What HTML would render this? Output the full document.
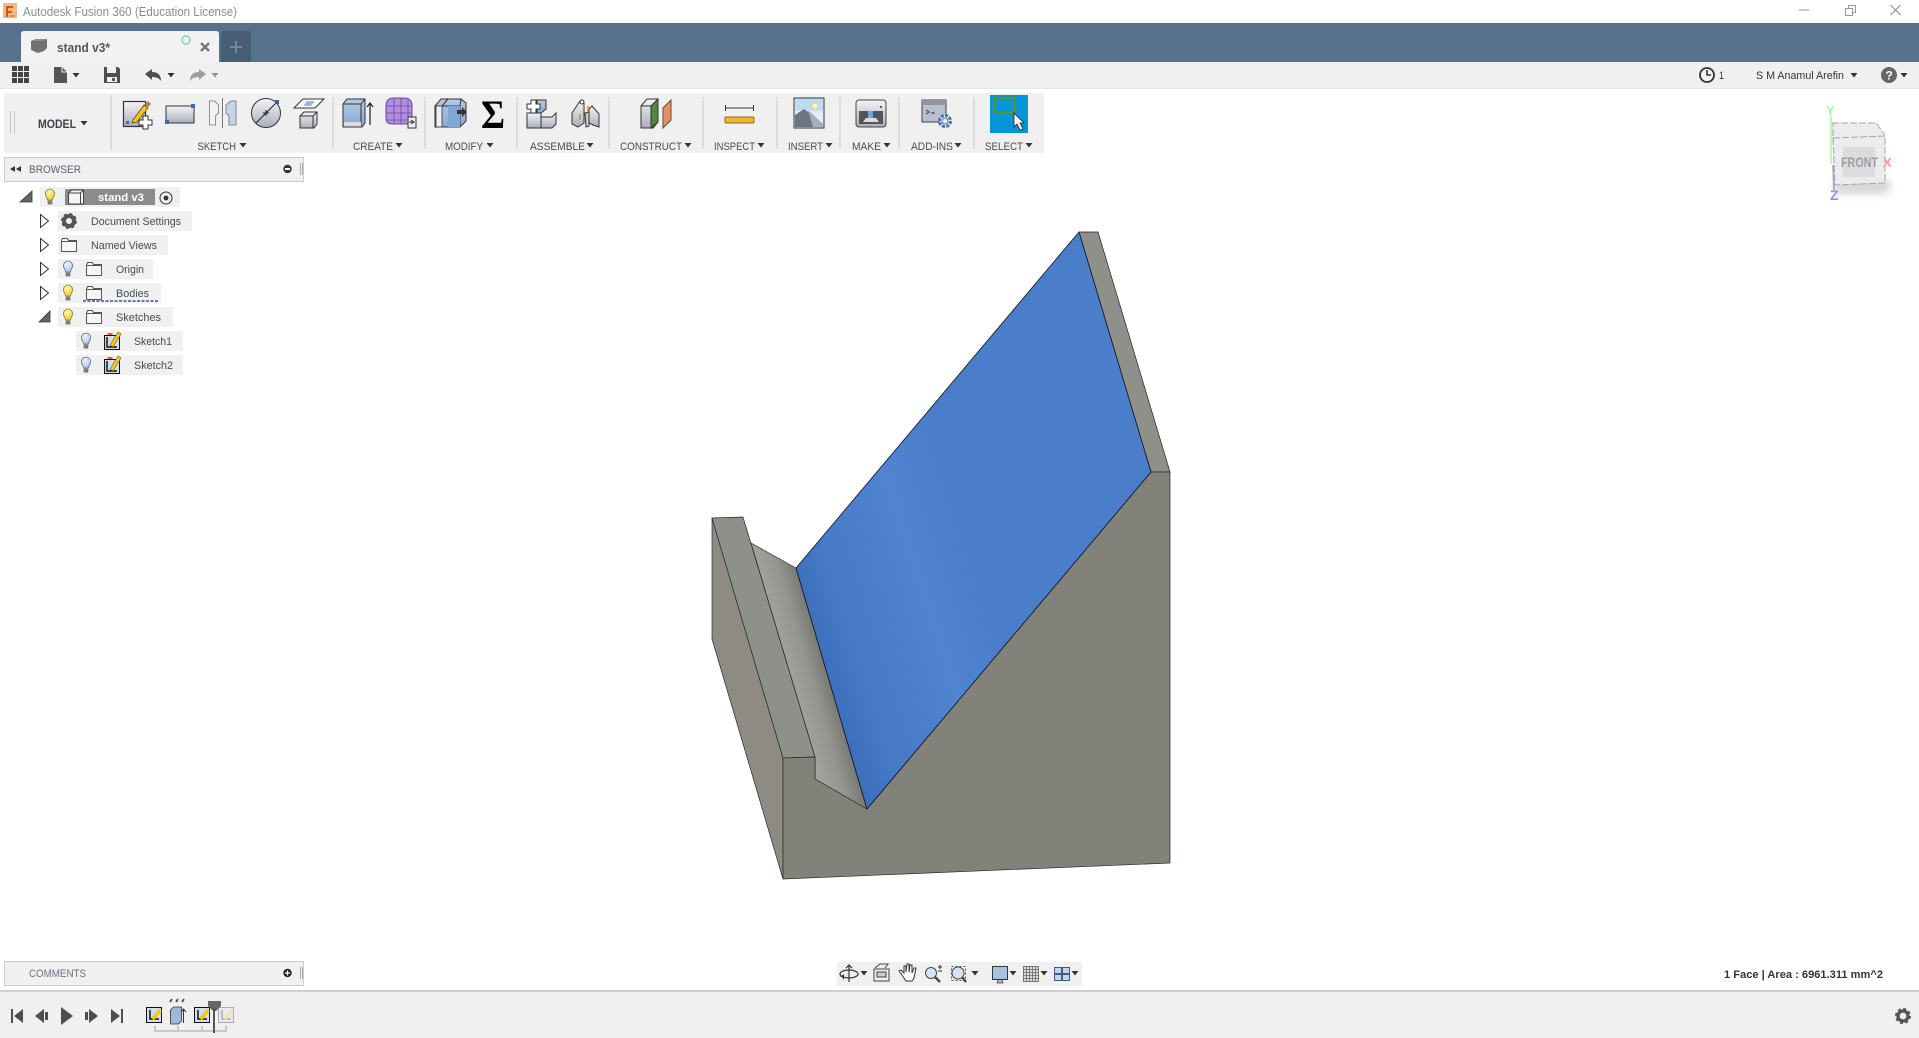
<!DOCTYPE html>
<html><head><meta charset="utf-8"><title>Autodesk Fusion 360</title>
<style>
html,body{margin:0;padding:0;background:#fff;width:1919px;height:1038px;overflow:hidden}
svg{display:block}
text{font-family:"Liberation Sans",sans-serif;font-size:11px;fill:#454b55}
</style></head><body>
<svg width="1919" height="1038" viewBox="0 0 1919 1038" xmlns="http://www.w3.org/2000/svg">
<defs>
<linearGradient id="g" x1="0" y1="0" x2="0" y2="1"><stop offset="0" stop-color="#f4f4f6"/><stop offset="1" stop-color="#a9aebb"/></linearGradient>
<linearGradient id="gb" x1="0" y1="0" x2="0" y2="1"><stop offset="0" stop-color="#b3cbe6"/><stop offset="1" stop-color="#88a9d2"/></linearGradient>
<linearGradient id="blue" gradientUnits="userSpaceOnUse" x1="815" y1="700" x2="1000" y2="640"><stop offset="0" stop-color="#376bb6"/><stop offset=".25" stop-color="#4578c5"/><stop offset=".7" stop-color="#5084d0"/><stop offset="1" stop-color="#4a7dca"/></linearGradient>
<linearGradient id="slope" gradientUnits="userSpaceOnUse" x1="786" y1="660" x2="827" y2="648"><stop offset="0" stop-color="#9fa29d"/><stop offset=".45" stop-color="#939590"/><stop offset=".8" stop-color="#7b7c77"/><stop offset="1" stop-color="#62635e"/></linearGradient>
<radialGradient id="by" cx=".4" cy=".3" r=".8"><stop offset="0" stop-color="#fff7b0"/><stop offset="1" stop-color="#f0c814"/></radialGradient>
<radialGradient id="bb" cx=".4" cy=".3" r=".8"><stop offset="0" stop-color="#eef3ff"/><stop offset="1" stop-color="#a5bdea"/></radialGradient>
<g id="bulbY"><path d="M-4-2a4.600 4.600 0 1 1 8 0c-1 1.600-1.500 2.500-1.500 4h-5c0-1.500-.5-2.400-1.500-4z" fill="url(#by)" stroke="#8a8040" stroke-width=".8"/><rect x="-2.400" y="2.500" width="4.800" height="4" rx="1" fill="#7c7c7c"/></g>
<g id="bulbB"><path d="M-4-2a4.600 4.600 0 1 1 8 0c-1 1.600-1.500 2.500-1.500 4h-5c0-1.500-.5-2.400-1.500-4z" fill="url(#bb)" stroke="#66708a" stroke-width=".8"/><rect x="-2.400" y="2.500" width="4.800" height="4" rx="1" fill="#7c7c7c"/></g>
<g id="folder"><path d="M.5 2.500V13.500H15.500V2.500H7.500L6.500.5H1.500L.5 2.500M.5 3.500H15.500" fill="#f6f6f6" stroke="#555" stroke-width="1"/></g>
<g id="sk"><rect x=".5" y="2.500" width="15" height="14" fill="#cfe0f2" stroke="#111"/><path d="M3 4v10h10" fill="none" stroke="#111" stroke-width="1.500"/><path d="M6 12L14-1l3 2L9 14z" fill="#f3c91a" stroke="#6f5a10" stroke-width=".6"/><path d="M3.500 0h5v2h-5z" fill="#e8603a"/></g>
<g id="skp"><rect x=".5" y=".5" width="15" height="15" fill="#cfe0f2" stroke="#111"/><path d="M4 3v9h9" fill="none" stroke="#111" stroke-width="1.500"/><path d="M5 11L13 2l3 2-8 9z" fill="#f3c91a"/></g>
<path id="tr" d="M-3.500-2h7l-3.500 4.500z" fill="#333"/>
<path id="tro" d="M.5.5L8.500 7 .5 13.500z" fill="#fff" stroke="#333" stroke-width="1"/>
</defs>

<!-- title bar -->
<rect width="1919" height="23" fill="#fff"/>
<rect x="3" y="3" width="14" height="15" fill="#f5b78a"/><path d="M6 6h7v2H8v3h4v2H8v4H6z" fill="#c85a12"/><rect x="10" y="15" width="5" height="2" fill="#e88a3a"/>
<text x="23" y="16" textLength="214" lengthAdjust="spacingAndGlyphs" style="font-size:12.500px;fill:#8c8c8c">Autodesk Fusion 360 (Education License)</text>
<path d="M1799 10h10" stroke="#999" stroke-width="1"/>
<path d="M1848.500 5.500h7v7h-7z" fill="#fff" stroke="#999"/><path d="M1845.500 8.500h7v7h-7z" fill="#fff" stroke="#999"/>
<path d="M1890.500 5l10 10M1900.500 5l-10 10" stroke="#888" stroke-width="1"/>

<!-- blue tab bar -->
<rect y="23" width="1919" height="39" fill="#57728c"/>
<path d="M21 62V34q0-3 3-3H216q3 0 3 3v28z" fill="#f2f2f3"/>
<path d="M221 62V34q0-3 3-3H248q3 0 3 3v28z" fill="#455d75"/>
<path d="M31 41l5-2h11v9l-3 3-6 2-7-3z" fill="#717171"/><path d="M31 41l5-2h11l-4 2z" fill="#8f8f8f"/>
<text x="57" y="52" textLength="53" lengthAdjust="spacingAndGlyphs" style="font-size:13px;fill:#555;font-weight:bold">stand v3*</text>
<circle cx="186" cy="40" r="4" fill="none" stroke="#7dd3c0" stroke-width="1.400"/>
<path d="M201 43l8 8M209 43l-8 8" stroke="#777" stroke-width="2.400"/>
<path d="M236 41v12M230 47h12" stroke="#74879c" stroke-width="2"/>

<!-- quick access row -->
<rect y="62" width="1919" height="26" fill="#f0f0f0"/>
<rect y="88" width="1919" height="1" fill="#e5e5e5"/>
<g fill="#444"><rect x="12" y="66" width="5" height="5"/><rect x="18" y="66" width="5" height="5"/><rect x="24" y="66" width="5" height="5"/><rect x="12" y="72" width="5" height="5"/><rect x="18" y="72" width="5" height="5"/><rect x="24" y="72" width="5" height="5"/><rect x="12" y="78" width="5" height="5"/><rect x="18" y="78" width="5" height="5"/><rect x="24" y="78" width="5" height="5"/></g>
<path d="M54 67h8l5 5v11H54z" fill="#555"/><path d="M62 67v5h5" fill="none" stroke="#f0f0f0"/>
<use href="#tr" x="76" y="75"/>
<path d="M104 67h14l2 2v14h-16z" fill="#4e4e4e"/><rect x="107" y="67" width="9" height="6" fill="#f0f0f0"/><rect x="107" y="77" width="10" height="5" fill="#f0f0f0"/><rect x="112" y="78" width="3" height="3" fill="#555"/>
<path d="M145 74l7-5v3c6 0 9 3 9 9-2-3-5-4-9-4v3z" fill="#4e4e4e"/>
<use href="#tr" x="171" y="75"/>
<path d="M206 74l-7-5v3c-6 0-9 3-9 9 2-3 5-4 9-4v3z" fill="#9e9e9e"/>
<use href="#tr" x="215" y="75" opacity=".5"/>

<circle cx="1707" cy="75" r="7" fill="none" stroke="#333" stroke-width="1.800"/><path d="M1707 70v5h4" fill="none" stroke="#333" stroke-width="1.600"/>
<text x="1719" y="79" textLength="5" lengthAdjust="spacingAndGlyphs" style="fill:#333">1</text>
<text x="1756" y="79" textLength="88" lengthAdjust="spacingAndGlyphs" style="fill:#333">S M Anamul Arefin</text>
<use href="#tr" x="1854" y="75"/>
<circle cx="1889" cy="75" r="8" fill="#666"/><text x="1885.500" y="79.500" style="fill:#fff;font-weight:bold;font-size:12px">?</text>
<use href="#tr" x="1904" y="75"/>

<!-- toolbar -->
<rect x="4" y="93" width="1040" height="60" fill="#f0f0f0"/>
<path d="M10.500 111v23M14.500 111v23" stroke="#c8c8c8"/>
<text x="38" y="128" textLength="38" lengthAdjust="spacingAndGlyphs" style="font-weight:bold;font-size:11.500px;fill:#3c414b">MODEL</text>
<use href="#tr" x="84" y="123"/>
<g stroke="#dcdcdc" stroke-width="2"><path d="M111 95v55M333 97v52M425 97v52M517 97v52M609 97v52M703 97v52M777 97v52M840 97v52M899 97v52M974 97v52"/></g>

<!-- sketch icons -->
<rect x="123.500" y="101.500" width="22" height="25" fill="url(#g)" stroke="#333" stroke-width="1.200"/><rect x="126" y="121" width="3" height="3" fill="#3a6fc4"/><path d="M133 120l11-15 4 3-11 14-5 1z" fill="#f5c518" stroke="#5a4a10" stroke-width=".8"/><path d="M145 104l3-3 3 3-3 3z" fill="#b87a4a"/><path d="M143 116h5v4h4v5h-4v4h-5v-4h-4v-5h4z" fill="#fff" stroke="#333"/>
<rect x="166" y="106" width="28" height="17" fill="url(#g)" stroke="#333"/><rect x="191" y="104" width="4" height="4" fill="#3569c8"/><rect x="165" y="120" width="4" height="4" fill="#3569c8"/>
<path d="M209.500 101h5l4 4v8l-3 3v9h-6z" fill="#f3f3f4" stroke="#8a8f9a"/><path d="M222.500 98v30" stroke="#777"/><path d="M236 101h-5l-5 4v8l3 3v9h7z" fill="#c4d3e8" stroke="#7c8795"/>
<circle cx="266" cy="113" r="14.500" fill="url(#g)" stroke="#333"/><path d="M256 123l20-20M263 113h6M266 110v6" stroke="#222"/><rect x="275" y="100" width="4" height="4" fill="#2d5fc4"/>
<path d="M294 108l9-9h21l-9 9z" fill="#fff" stroke="#333"/><path d="M303 106l4-5h8l-4 5z" fill="#9db9da"/><path d="M300 116l4-4h13v12l-3 4h-14z" fill="url(#g)" stroke="#333"/><path d="M300 116h13v12M313 116l4-4" fill="none" stroke="#333"/>

<!-- create -->
<path d="M343 104l4-5h18v24l-3 4H343z" fill="url(#gb)" stroke="#333"/><path d="M343 104h18v23M361 104l4-5" fill="none" stroke="#333"/><rect x="344" y="122" width="17" height="4.500" fill="#d8dbe0"/><path d="M370 125v-22M367 107l3-4 3 4" fill="none" stroke="#222" stroke-width="1.200"/>
<path d="M386 106q0-8 8-8h10q8 0 8 8v12q0 6-6 6h-14q-6 0-6-6z" fill="#b08fe0" stroke="#6a4a9e"/><path d="M386 106h26M386 113h26M386 120h20M394 98v26M401 98v26M408 99v22" stroke="#6a4a9e" stroke-width=".8"/><rect x="408" y="117" width="8" height="11" fill="#eee" stroke="#333"/><path d="M409 122h4M411 120l3 2-3 2" fill="none" stroke="#333"/>

<!-- modify -->
<path d="M435 106l6-7h20l5 4v18l-6 6H435z" fill="url(#gb)" stroke="#333"/><path d="M442 106l6-7M442 106h18v21M460 106l1-7" fill="none" stroke="#333"/><rect x="436" y="106" width="6" height="21" fill="#eef0f3" stroke="#333" stroke-width=".8"/><path d="M448 106h12v21h-12z" fill="#7fa6d6"/><path d="M457 110h5v-3l5 5-5 5v-3h-5z" fill="#333"/>
<text x="481" y="128" textLength="24" lengthAdjust="spacingAndGlyphs" style="font-family:'Liberation Serif',serif;font-size:40px;font-weight:bold;fill:#000">Σ</text>

<!-- assemble -->
<path d="M527 113h14l5-4v-9h-9v13z" fill="url(#gb)" stroke="#333"/><rect x="527" y="113" width="14" height="15" fill="url(#g)" stroke="#333"/><path d="M541 117h11l4-4v11l-4 4h-11z" fill="url(#g)" stroke="#333"/><path d="M531 100h5v4h4v5h-4v4h-5v-4h-4v-5h4z" fill="#fff" stroke="#333"/>
<path d="M572 113l8-12 4 2v20l-6 4-6-3z" fill="url(#g)" stroke="#333"/><path d="M585 113l4-1v14l-3 1z" fill="#ccc" stroke="#333"/><path d="M592 106l7 8v13l-6-2-4-2v-14z" fill="url(#g)" stroke="#333"/><circle cx="582" cy="102" r="2" fill="#fff" stroke="#333"/><path d="M580 114v6M588 106v6" stroke="#f07a1a" stroke-width="1.400"/>

<!-- construct -->
<path d="M641 106l6-7h11v23l-5 6H641z" fill="url(#g)" stroke="#333"/><path d="M651 106l7-7v23l-7 6z" fill="#4f8a3c" stroke="#333"/><path d="M663 108l8-8v20l-8 8z" fill="#e98e5e" stroke="#553"/><path d="M641 106h10" stroke="#333"/>

<!-- inspect -->
<path d="M725.500 105v6M753.500 105v6M725 108h29" stroke="#333"/><rect x="725" y="117" width="29" height="6" rx="1" fill="#f2b731" stroke="#8a6a20"/>

<!-- insert -->
<rect x="794" y="98" width="30" height="30" fill="#dfeefb" stroke="#333"/><path d="M795 98.500h28v12H795z" fill="#bcdcf4"/><circle cx="815" cy="106" r="3" fill="#fff4c0" stroke="#e8d080"/><path d="M795 127v-12l9-6 7 5 12 12v1z" fill="#6e7582"/><path d="M808 110l15 14v3h-10z" fill="#a8adb8"/>

<!-- make -->
<rect x="856" y="100" width="30" height="27" rx="3" fill="url(#g)" stroke="#444"/><rect x="859" y="111" width="24" height="13" fill="#555"/><rect x="868" y="111" width="5" height="7" fill="#6fa8e0"/><path d="M863 122l3-4h10l3 4z" fill="#ddd"/><rect x="880" y="106" width="2" height="2" fill="#1a8a3a"/>

<!-- add-ins -->
<rect x="922" y="100" width="24" height="22" fill="#b9bfcc" stroke="#444"/><rect x="922" y="100" width="24" height="5" fill="#8f95a3"/><path d="M926 110l3 2-3 2M931 113h4" fill="none" stroke="#333"/>
<circle cx="945" cy="121" r="5.500" fill="#fff" stroke="#4a6ea8" stroke-width="3" stroke-dasharray="3 1.300"/><circle cx="945" cy="121" r="3" fill="#e8eefc" stroke="#4a6ea8"/>

<!-- select -->
<rect x="990" y="95" width="38" height="38" fill="#0696d7"/>
<rect x="994.500" y="98.500" width="20" height="14" fill="none" stroke="#5a9a1a" stroke-width="1.600"/>
<path d="M1014 113v14l3-3 3 6 3-1-3-6h4z" fill="#fff" stroke="#222" stroke-width=".8"/>

<!-- labels -->
<g>
<text x="197.500" y="150" textLength="38.500" lengthAdjust="spacingAndGlyphs">SKETCH</text><use href="#tr" x="243" y="145"/>
<text x="353" y="150" textLength="40" lengthAdjust="spacingAndGlyphs">CREATE</text><use href="#tr" x="399" y="145"/>
<text x="445" y="150" textLength="38" lengthAdjust="spacingAndGlyphs">MODIFY</text><use href="#tr" x="490" y="145"/>
<text x="530" y="150" textLength="55" lengthAdjust="spacingAndGlyphs">ASSEMBLE</text><use href="#tr" x="590" y="145"/>
<text x="620" y="150" textLength="62" lengthAdjust="spacingAndGlyphs">CONSTRUCT</text><use href="#tr" x="688" y="145"/>
<text x="714" y="150" textLength="41" lengthAdjust="spacingAndGlyphs">INSPECT</text><use href="#tr" x="761" y="145"/>
<text x="788" y="150" textLength="35" lengthAdjust="spacingAndGlyphs">INSERT</text><use href="#tr" x="829" y="145"/>
<text x="852" y="150" textLength="29" lengthAdjust="spacingAndGlyphs">MAKE</text><use href="#tr" x="887" y="145"/>
<text x="911" y="150" textLength="42" lengthAdjust="spacingAndGlyphs">ADD-INS</text><use href="#tr" x="958" y="145"/>
<text x="985" y="150" textLength="38" lengthAdjust="spacingAndGlyphs">SELECT</text><use href="#tr" x="1029" y="145"/>
</g>

<!-- browser -->
<rect x="4.500" y="157.500" width="299" height="24" fill="#f0f0f0" stroke="#ccc"/>
<path d="M10 169l5-3v6zM16 169l5-3v6z" fill="#333"/>
<text x="29" y="173" textLength="52" lengthAdjust="spacingAndGlyphs" style="fill:#5a616c">BROWSER</text>
<circle cx="287.500" cy="169" r="4.200" fill="#333"/><rect x="285" y="168" width="5" height="2" fill="#fff"/>
<path d="M300.500 163v12M302.500 163v12" stroke="#aaa"/>

<g fill="#f0f0f0">
<rect x="40" y="187" width="140" height="20"/><rect x="58" y="211" width="134" height="20"/><rect x="58" y="235" width="110" height="20"/><rect x="58" y="259" width="95" height="20"/><rect x="58" y="283" width="103" height="20"/><rect x="58" y="307" width="115" height="20"/><rect x="76" y="331" width="107" height="20"/><rect x="76" y="355" width="107" height="20"/>
</g>
<path d="M20 202L32 191v11z" fill="#666" stroke="#333" stroke-width=".8"/>
<use href="#bulbY" x="50" y="198"/>
<rect x="65" y="189" width="90" height="16" fill="#8b8b8b"/>
<path d="M68.500 193l3-3h12v14H68.500z" fill="#f5f5f5" stroke="#444"/><path d="M68.500 193h12v11M80.500 193l3-3" fill="none" stroke="#444"/>
<text x="98" y="201" textLength="46" lengthAdjust="spacingAndGlyphs" style="fill:#fff;font-weight:bold">stand v3</text>
<circle cx="166" cy="198" r="6" fill="none" stroke="#333"/><circle cx="166" cy="198" r="2.400" fill="#333"/>

<use href="#tro" x="40" y="214"/>
<circle cx="69" cy="221" r="5" fill="none" stroke="#555" stroke-width="4"/><circle cx="69" cy="221" r="7" fill="none" stroke="#555" stroke-width="2" stroke-dasharray="3 2.500"/>
<text x="91" y="225" textLength="90" lengthAdjust="spacingAndGlyphs">Document Settings</text>
<use href="#tro" x="40" y="238"/>
<use href="#folder" x="61" y="238"/>
<text x="91" y="249" textLength="66" lengthAdjust="spacingAndGlyphs">Named Views</text>
<use href="#tro" x="40" y="262"/>
<use href="#bulbB" x="68" y="270"/>
<use href="#folder" x="86" y="262"/>
<text x="116" y="273" textLength="28" lengthAdjust="spacingAndGlyphs">Origin</text>
<use href="#tro" x="40" y="286"/>
<use href="#bulbY" x="68" y="294"/>
<use href="#folder" x="86" y="286"/>
<text x="116" y="297" textLength="33" lengthAdjust="spacingAndGlyphs">Bodies</text>
<path d="M83 301h75" fill="none" stroke="#667ea0" stroke-width="2" stroke-dasharray="3 1.500"/>
<path d="M39 322L50 311v11z" fill="#666" stroke="#333" stroke-width=".8"/>
<use href="#bulbY" x="68" y="318"/>
<use href="#folder" x="86" y="310"/>
<text x="116" y="321" textLength="45" lengthAdjust="spacingAndGlyphs">Sketches</text>
<use href="#bulbB" x="86" y="342"/>
<use href="#sk" x="104" y="333"/>
<text x="134" y="345" textLength="38" lengthAdjust="spacingAndGlyphs">Sketch1</text>
<use href="#bulbB" x="86" y="366"/>
<use href="#sk" x="104" y="357"/>
<text x="134" y="369" textLength="39" lengthAdjust="spacingAndGlyphs">Sketch2</text>

<!-- view cube -->
<path d="M1834 178h52l6 10-8 6h-50z" fill="#bbb" opacity=".6" style="filter:blur(4px)"/>
<path d="M1832 123h44l9 12v48l-50 2-3-47z" fill="#ececec"/>
<rect x="1843" y="147" width="32" height="30" fill="#dcdcde"/>
<path d="M1832 123h44l9 12M1833 138l52-2v47l-50 2-2-47V123" fill="none" stroke="#a5a5a5" stroke-dasharray="7 2"/>
<text x="1841" y="167" textLength="37" lengthAdjust="spacingAndGlyphs" style="font-size:14px;font-weight:bold;fill:#9a9da4">FRONT</text>
<path d="M1831 116v48" stroke="#a8f5a8" stroke-width="1.500"/><path d="M1833 165l1 25" stroke="#9a9ade" stroke-width="1.500"/>
<text x="1826" y="115" style="font-size:13px;fill:#a4f8a4;font-weight:bold">Y</text>
<text x="1830" y="200" style="font-size:14px;fill:#8f8ff5;font-weight:bold">Z</text>
<text x="1883" y="167" style="font-size:13px;fill:#f59a9a;font-weight:bold">X</text>

<!-- model -->
<g stroke-linejoin="round">
<polygon points="712,518 783,758 783,879 712,639" fill="#8d8b84" stroke="#2a2a28" stroke-width=".7"/>
<polygon points="712,518 743,517 815,757 783,758" fill="#8f908a" stroke="#2a2a28" stroke-width=".7"/>
<polygon points="751,543 796,568 867,809 815,779 815,757" fill="url(#slope)" stroke="#2a2a28" stroke-width=".7"/>
<polygon points="1079,232 1098,232 1170,472 1151,472" fill="#8f908a" stroke="#222" stroke-width=".7"/>
<polygon points="783,758 815,757 815,779 867,809 1151,472 1170,472 1170,863 783,879" fill="#82827b" stroke="#2a2a28" stroke-width=".7"/>
<polygon points="796,568 1079,232 1151,472 867,809" fill="url(#blue)" stroke="#10131a" stroke-width=".8"/>
</g>

<!-- nav bar -->
<rect x="837" y="962" width="245" height="24" fill="#f0f0f0"/>
<ellipse cx="849" cy="974" rx="9" ry="4" fill="none" stroke="#333" stroke-width="1.200"/><path d="M849 965v17M846 968l3-3 3 3" fill="none" stroke="#333" stroke-width="1.200"/><path d="M842 977l-2 0 4-3v6z" fill="#333"/>
<use href="#tr" x="864" y="973"/>
<rect x="874" y="969" width="15" height="12" fill="#f0f0f0" stroke="#444"/><rect x="877" y="972" width="9" height="5" fill="#ccc" stroke="#444"/><path d="M875 968l5-4h8l-3 4" fill="none" stroke="#444"/>
<path d="M902 975l-3-4 2-1 3 3v-7h2v6l1-8h2l0 8 1-7h2l0 8 2-5h2l-2 10-2 3h-6z" fill="#fff" stroke="#333" stroke-width="1"/>
<circle cx="931" cy="973" r="5.500" fill="#d5e4f2" stroke="#444"/><path d="M935 977l5 5" stroke="#444" stroke-width="2.400"/><path d="M938 967h4M940 965v4M938 971h4" stroke="#333"/>
<rect x="951.500" y="966.500" width="14" height="14" fill="none" stroke="#555" stroke-dasharray="2 2"/><circle cx="958" cy="973" r="6" fill="#d5e4f2" stroke="#444"/><path d="M962 977l4 5" stroke="#444" stroke-width="2.400"/>
<use href="#tr" x="975" y="973"/>
<rect x="992.500" y="966.500" width="15" height="13" fill="#a8c0e2" stroke="#333"/><path d="M998 980l-1 3h6l-1-3" fill="#bbb" stroke="#333" stroke-width=".7"/>
<use href="#tr" x="1013" y="973"/>
<g stroke="#777"><rect x="1023.500" y="966.500" width="15" height="15" fill="#ddd"/><path d="M1026.500 966v16M1029.500 966v16M1032.500 966v16M1035.500 966v16M1023 969.500h16M1023 972.500h16M1023 975.500h16M1023 978.500h16" stroke="#666" stroke-width=".8"/></g>
<use href="#tr" x="1044" y="973"/>
<g fill="#c2d5ee" stroke="#3f5a85"><rect x="1054.500" y="967.500" width="7" height="6"/><rect x="1062.500" y="967.500" width="7" height="6"/><rect x="1054.500" y="974.500" width="7" height="6"/><rect x="1062.500" y="974.500" width="7" height="6"/></g>
<use href="#tr" x="1075" y="973"/>

<text x="1724" y="978" textLength="159" lengthAdjust="spacingAndGlyphs" style="font-weight:bold;fill:#333">1 Face | Area : 6961.311 mm^2</text>

<!-- comments -->
<rect x="4.500" y="961.500" width="299" height="24" fill="#f0f0f0" stroke="#ccc"/>
<text x="29" y="977" textLength="57" lengthAdjust="spacingAndGlyphs" style="fill:#6a7280">COMMENTS</text>
<circle cx="287.500" cy="973" r="4.200" fill="#222"/><path d="M285 973h5M287.500 970.500v5" stroke="#fff" stroke-width="1.200"/>
<path d="M300.500 967v12M302.500 967v12" stroke="#aaa"/>

<!-- timeline -->
<rect y="992" width="1919" height="46" fill="#f0f0f0"/>
<rect y="990" width="1919" height="2" fill="#cfcfcf"/>
<g fill="#4e4e4e">
<rect x="11" y="1009" width="2" height="14"/><path d="M23 1009v14l-9-7z"/>
<path d="M44 1009v14l-9-7z"/><rect x="45" y="1012" width="3" height="8"/>
<path d="M61 1007l12 9-12 9z"/>
<rect x="85" y="1012" width="3" height="8"/><path d="M89 1009l9 7-9 7z"/>
<path d="M111 1009l9 7-9 7z"/><rect x="121" y="1009" width="2" height="14"/>
</g>
<use href="#skp" x="146" y="1007"/>
<path d="M170.500 1010l3-3h8v14l-3 3h-8z" fill="#9fb8d8" stroke="#333" stroke-width=".8"/><path d="M183.500 1023v-14M181 1012l2.500-3 2.500 3" fill="none" stroke="#333"/>
<path d="M170 1002l2-3M176 1002l2-3M182 1002l2-3" stroke="#555" stroke-width="2"/>
<use href="#skp" x="194" y="1007"/>
<g opacity=".3"><use href="#skp" x="218" y="1007"/></g>
<path d="M155 1026v5h71v-5M178 1026v5M202 1026v5" fill="none" stroke="#c8c8c8" stroke-width="2"/>
<path d="M208 1001h13v5l-5 5h-3l-5-5z" fill="#666"/><rect x="213" y="1008" width="2" height="25" fill="#555"/>
<circle cx="1903" cy="1016" r="5" fill="none" stroke="#555" stroke-width="3.200"/><circle cx="1903" cy="1016" r="7" fill="none" stroke="#555" stroke-width="2" stroke-dasharray="3 2.500"/>
</svg>
</body></html>
